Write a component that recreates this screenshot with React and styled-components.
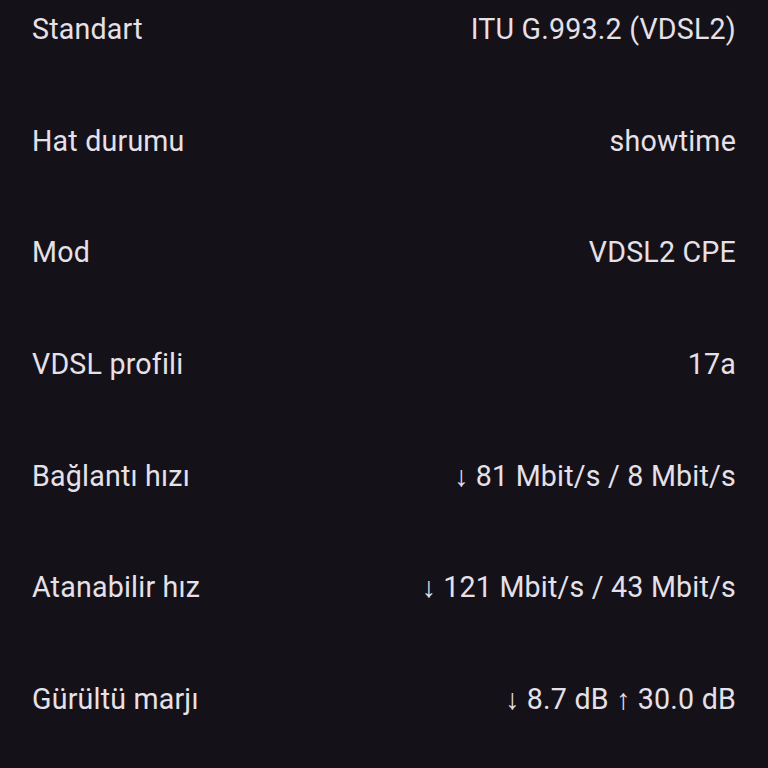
import React from "react";
import styled, { createGlobalStyle } from "styled-components";

const Global = createGlobalStyle`
  html, body { margin: 0; padding: 0; background: #141218; }
  body { width: 768px; height: 768px; overflow: hidden; }
`;

const Screen = styled.div`
  width: 768px;
  height: 768px;
  background: #141218;
  box-sizing: border-box;
  padding: 13px 32px 0;
  display: flex;
  flex-direction: column;
  gap: 79.67px;
  font-family: Roboto, "Noto Sans", sans-serif;
  color: #e6e0e9;
`;

const Row = styled.div`
  display: flex;
  justify-content: space-between;
  align-items: center;
  height: 32px;
  font-size: 28.6px;
  line-height: 32px;
  letter-spacing: 0.2px;
`;

const Label = styled.span``;
const Value = styled.span`
  text-align: right;
`;

const rows = [
  ["Standart", "ITU G.993.2 (VDSL2)"],
  ["Hat durumu", "showtime"],
  ["Mod", "VDSL2 CPE"],
  ["VDSL profili", "17a"],
  ["Bağlantı hızı", "↓ 81 Mbit/s / 8 Mbit/s"],
  ["Atanabilir hız", "↓ 121 Mbit/s / 43 Mbit/s"],
  ["Gürültü marjı", "↓ 8.7 dB ↑ 30.0 dB"],
];

export default function App() {
  return (
    <>
      <Global />
      <Screen>
        {rows.map(([l, v]) => (
          <Row key={l}>
            <Label>{l}</Label>
            <Value>{v}</Value>
          </Row>
        ))}
      </Screen>
    </>
  );
}
